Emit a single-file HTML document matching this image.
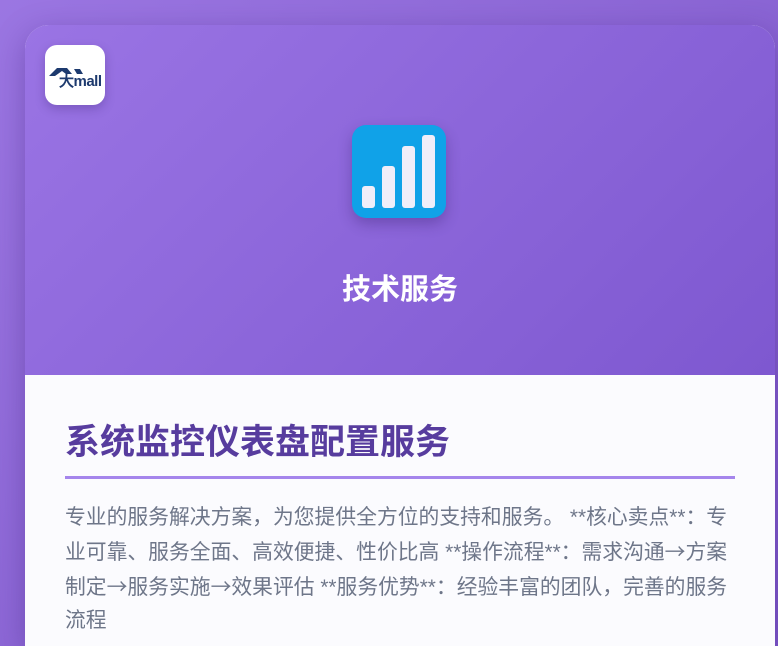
<!DOCTYPE html>
<html><head><meta charset="utf-8"><style>
html,body{margin:0;padding:0;width:778px;height:646px;overflow:hidden;background:linear-gradient(135deg,#9b76e2,#7c56c8);font-family:"Liberation Sans","Noto Sans CJK SC",sans-serif;position:relative;}
.card{position:absolute;left:25px;top:25px;width:750px;height:621px;border-radius:24px 24px 0 0;overflow:hidden;box-shadow:0 8px 30px rgba(60,30,120,.35);background:#fbfbfe;}
.hd{position:absolute;left:0;top:0;width:100%;height:350px;background:linear-gradient(135deg,#9a74e4,#7e58d0);}
.logo{position:absolute;left:20px;top:20px;width:60px;height:60px;background:#fff;border-radius:12px;box-shadow:0 4px 10px rgba(40,20,90,.25);}
.icon{position:absolute;left:327px;top:100px;width:94px;height:93px;background:#10a2e8;border-radius:14px;box-shadow:0 6px 14px rgba(40,20,90,.3);}
.bar{position:absolute;bottom:10px;width:13px;background:#f1eef9;border-radius:3px;}
.ht{position:absolute;left:0;width:750px;top:241px;text-align:center;color:#fff;font-size:29px;font-weight:bold;}
h1{position:absolute;left:40px;top:389px;margin:0;font-size:35px;color:#573c9e;font-weight:bold;white-space:nowrap;}
.ln{position:absolute;left:40px;top:451px;width:670px;height:3px;background:#a585ec;}
p{position:absolute;left:40px;top:476px;width:672px;margin:0;font-size:20.8px;line-height:33px;color:#6e7689;}
.a{font-family:"Noto Sans CJK SC",sans-serif;}
</style></head><body>
<div class="card">
<div class="hd">
<div class="logo"><svg width="60" height="60" viewBox="0 0 60 60"><path d="M4 31 L12 23 L22 23 L27 29 L21 29 L17 26 L10 31 Z" fill="#1d3a6e"/><path d="M29 24 L35 24 L38 29 L32 29 Z" fill="#1d3a6e"/><text x="14" y="41" font-family="Liberation Sans" font-weight="bold" font-size="15" fill="#1d3a6e" textLength="43">大mall</text></svg></div>
<div class="icon"><div class="bar" style="left:10px;height:22px"></div><div class="bar" style="left:30px;height:42px"></div><div class="bar" style="left:50px;height:62px"></div><div class="bar" style="left:70px;height:73px"></div></div>
<div class="ht">技术服务</div>
</div>
<h1>系统监控仪表盘配置服务</h1>
<div class="ln"></div>
<p>专业的服务解决方案，为您提供全方位的支持和服务。 **核心卖点**：专业可靠、服务全面、高效便捷、性价比高 **操作流程**：需求沟通<span class="a">→</span>方案制定<span class="a">→</span>服务实施<span class="a">→</span>效果评估 **服务优势**：经验丰富的团队，完善的服务流程</p>
</div>
</body></html>
